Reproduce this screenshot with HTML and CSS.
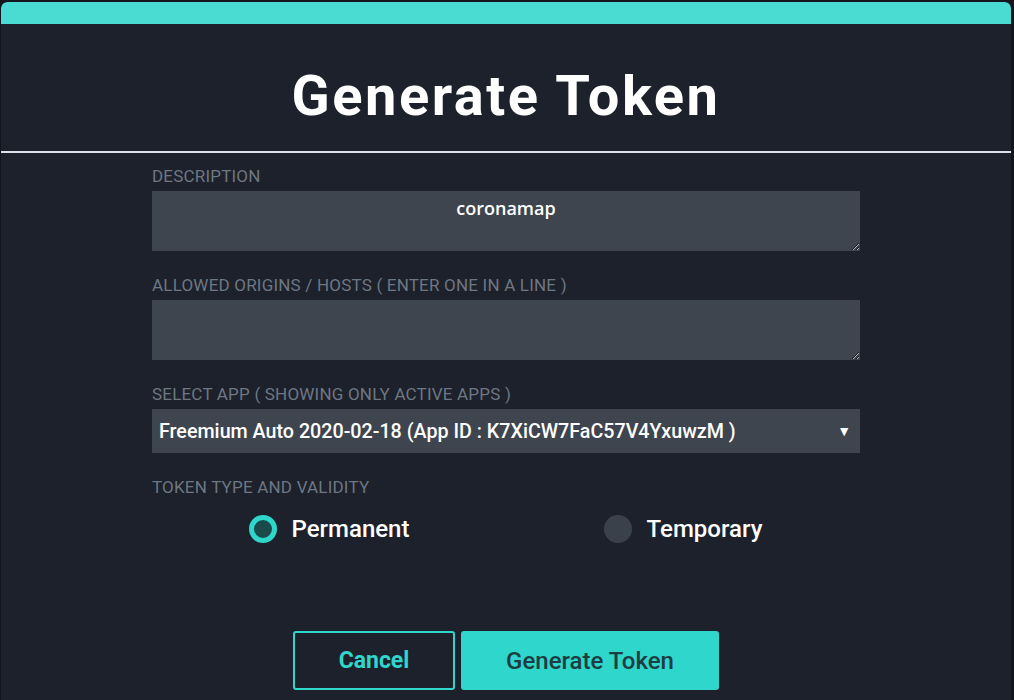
FILE: index.html
```html
<!DOCTYPE html>
<html lang="en">
<head>
<meta charset="utf-8">
<title>Generate Token</title>
<link rel="stylesheet" href="styles.css">
</head>
<body>
<div class="dialog">
  <div class="topbar"></div>
  <div class="header">
    <h1 class="title">Generate Token</h1>
  </div>
  <form class="form">
    <div class="field">
      <label class="label">Description</label>
      <textarea class="input area">coronamap</textarea>
    </div>
    <div class="field">
      <label class="label">Allowed Origins / Hosts ( Enter one in a line )</label>
      <textarea class="input area"></textarea>
    </div>
    <div class="field">
      <label class="label">Select App ( Showing only active apps )</label>
      <div class="select">
        <span class="select-text">Freemium Auto 2020-02-18 (App ID : K7XiCW7FaC57V4YxuwzM )</span>
        <span class="caret">&#9660;</span>
      </div>
    </div>
    <div class="field">
      <label class="label">Token type and validity</label>
      <div class="radios">
        <div class="radio-opt"><span class="radio checked"></span><span class="radio-text">Permanent</span></div>
        <div class="radio-opt"><span class="radio"></span><span class="radio-text">Temporary</span></div>
      </div>
    </div>
    <div class="actions">
      <button type="button" class="btn btn-cancel">Cancel</button>
      <button type="button" class="btn btn-primary">Generate Token</button>
    </div>
  </form>
</div>
</body>
</html>
```
FILE: styles.css
```css
html, body {
  margin: 0;
  padding: 0;
  background: #13171d;
  height: 100%;
  overflow: hidden;
}
body {
  box-sizing: border-box;
  font-family: Roboto, "Liberation Sans", sans-serif;
  padding: 2px 3px 0 1px;
}
.dialog {
  background: #1c212b;
  border-radius: 6px 6px 0 0;
  height: 100%;
  overflow: hidden;
}
.topbar {
  height: 22px;
  background: #4adbd3;
  border-radius: 6px 6px 0 0;
}
.header {
  height: 127px;
  border-bottom: 2px solid #dde2e8;
  display: flex;
  justify-content: center;
}
.title {
  margin: 0;
  padding-top: 42px;
  font-size: 56px;
  line-height: 60px;
  font-weight: 700;
  color: #ffffff;
  letter-spacing: 2.5px;
}
.form {
  width: 708px;
  margin: 0 auto;
  padding-top: 14px;
  display: flex;
  flex-direction: column;
  gap: 25px;
}
.field {
  display: flex;
  flex-direction: column;
}
.label {
  font-size: 17px;
  line-height: 18px;
  letter-spacing: 0.2px;
  text-transform: uppercase;
  color: #6e7783;
  margin-bottom: 6px;
}
.input {
  display: block;
  box-sizing: border-box;
  width: 708px;
  background: #3e454f;
  border: none;
  outline: none;
  color: #ffffff;
}
.area {
  height: 60px;
  padding: 5px 10px;
  text-align: center;
  font-family: "Open Sans", sans-serif;
  font-weight: 600;
  font-size: 18px;
  line-height: 24px;
  resize: vertical;
}
.select {
  height: 44px;
  background: #3e454f;
  display: flex;
  align-items: center;
  justify-content: space-between;
  padding: 0 9px 0 7px;
}
.select-text {
  color: #ffffff;
  font-size: 19.7px;
  font-weight: 500;
}
.caret {
  color: #ffffff;
  font-size: 14px;
}
.radios {
  display: grid;
  grid-template-columns: 1fr 1fr;
  margin-top: 12px;
}
.radio-opt {
  display: flex;
  align-items: center;
  justify-content: center;
  gap: 15px;
}
.radio {
  width: 28px;
  height: 28px;
  border-radius: 50%;
  background: #3b414b;
  box-sizing: border-box;
}
.radio.checked {
  background: #1b4a4b;
  border: 5px solid #2fd6cb;
}
.radio-text {
  color: #ffffff;
  font-size: 24px;
  font-weight: 500;
  line-height: 30px;
}
.actions {
  display: flex;
  justify-content: center;
  gap: 6px;
  margin-top: 62px;
}
.btn {
  height: 59px;
  border-radius: 3px;
  font-family: Roboto, sans-serif;
  cursor: pointer;
}
.btn-cancel {
  width: 162px;
  background: transparent;
  border: 2px solid #2fd6cb;
  color: #2fd6cb;
  font-weight: 700;
  font-size: 23px;
}
.btn-primary {
  width: 258px;
  background: #2fd6cb;
  border: none;
  color: #1d3d42;
  font-weight: 500;
  font-size: 24px;
}
```
